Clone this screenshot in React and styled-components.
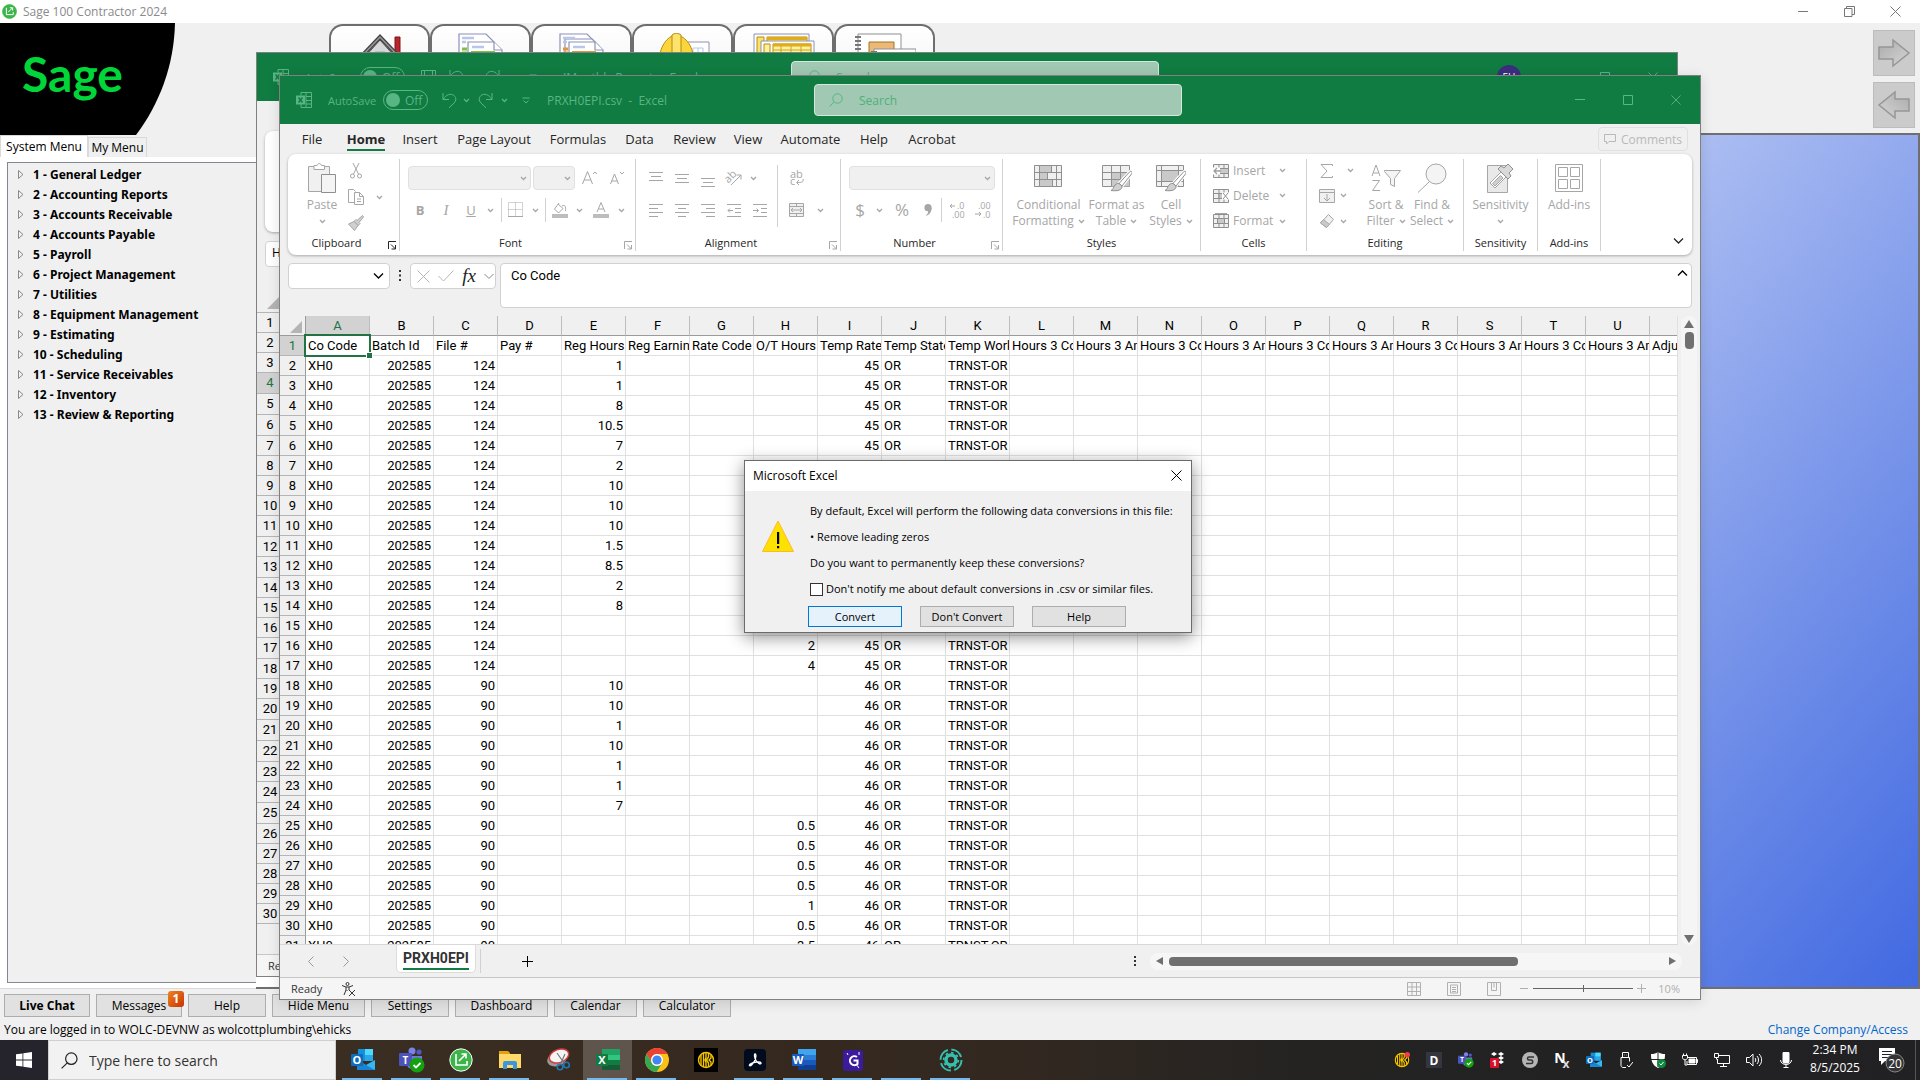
import styled, { createGlobalStyle, css } from "styled-components";

const GlobalStyle = createGlobalStyle`
  * {
    box-sizing: border-box;
  }
  body {
    margin: 0;
    overflow: hidden;
    font-family: "Open Sans", "Noto Sans", sans-serif;
    font-size: 12px;
    color: #000;
  }
  button, input {
    font: inherit;
    color: inherit;
  }
  button {
    padding: 0;
    border: 0;
    background: none;
  }
  svg {
    display: block;
    flex: none;
  }
`;

const gridFont = `Roboto, "Liberation Sans", sans-serif`;

/* ---------- desktop ---------- */
const Desktop = styled.div`
  position: relative;
  height: 100vh;
  display: flex;
  flex-direction: column;
  overflow: hidden;
  background: #f0f0f0;
`;

/* ---------- sage ---------- */
const SageTitle = styled.header`
  display: flex;
  align-items: center;
  height: 23px;
  padding-left: 2px;
  background: #fff;
  color: #8a8a8a;
  gap: 6px;
`;
const SageControls = styled.div`
  display: flex;
  margin-left: auto;
  margin-right: 2px;
  color: #777;
  button {
    display: grid;
    place-items: center;
    width: 46px;
    height: 20px;
  }
`;
const SageBody = styled.div`
  flex: 1;
  display: flex;
  min-height: 0;
`;
const SageSide = styled.aside`
  width: 256px;
  flex: none;
  display: flex;
  flex-direction: column;
`;
const Logo = styled.div`
  width: 175px;
  height: 112px;
  padding: 21px 0 0 22px;
  background: #000;
  clip-path: path("M0 0H175C174 42 160 80 136 112H0Z");
  color: #00d639;
  font: 700 48px/60px Lato, sans-serif;
`;
const SideTabs = styled.div`
  display: flex;
  align-items: flex-end;
  height: 22px;
`;
const SideTab = styled.button`
  width: ${(props) => (props.$active ? "88px" : "59px")};
  height: ${(props) => (props.$active ? "22px" : "20px")};
  border: 1px solid #d9d9d9;
  border-bottom: 0;
  background: ${(props) => (props.$active ? "#fff" : "#f0f0f0")};
`;
const TreePage = styled.div`
  flex: 1;
  padding: 5px 0 5px 7px;
  background: #fff;
  border-bottom: 1px solid #d9d9d9;
`;
const Tree = styled.ul`
  height: 100%;
  margin: 0;
  padding: 1px 0 0 10px;
  list-style: none;
  border: 1px solid #828790;
  border-right: 0;
  background: #f0f0f0;
  font-family: "Noto Sans", sans-serif;
  li {
    display: flex;
    align-items: center;
    gap: 9px;
    height: 20px;
    font-weight: 700;
  }
`;
const SageMain = styled.main`
  flex: 1;
  display: flex;
  flex-direction: column;
`;
const SageToolbar = styled.div`
  position: relative;
  display: flex;
  height: 110px;
  padding: 1px 0 0 73px;
`;
const BigTab = styled.button`
  width: 101px;
  height: 60px;
  display: flex;
  justify-content: center;
  padding-top: 7px;
  border: 2px solid #6e6e6e;
  border-bottom: 0;
  border-radius: 14px 14px 0 0;
  background: linear-gradient(#fff, #f2f2f2);
`;
const ArrowStack = styled.div`
  display: flex;
  flex-direction: column;
  gap: 6px;
  margin: 6px 5px 0 auto;
  button {
    display: grid;
    place-items: center;
    width: 42px;
    height: 46px;
    border: 1px solid #bcbcbc;
    background: #cbcbcb;
  }
`;
const Workspace = styled.div`
  flex: 1;
  border: solid #6f6f6f;
  border-width: 2px 2px 2px 0;
  background: linear-gradient(130deg, #fff 30%, #4169e1 100%);
`;
const SageButtons = styled.div`
  display: flex;
  align-items: center;
  gap: 6px;
  height: 32px;
  padding: 1px 0 0 4px;
`;
const SageButton = styled.button`
  position: relative;
  width: ${(props) => props.$w}px;
  height: 23px;
  border: 1px solid #adadad;
  background: #e1e1e1;
  font-weight: ${(props) => (props.$bold ? 700 : 400)};
`;
const Badge = styled.span`
  position: absolute;
  top: -4px;
  right: -3px;
  width: 16px;
  height: 16px;
  border-radius: 3px;
  background: linear-gradient(135deg, #f0841c, #c93205);
  color: #fff;
  font-weight: 700;
  line-height: 16px;
`;
const SageStatus = styled.footer`
  display: flex;
  justify-content: space-between;
  height: 19px;
  padding: 0 12px 0 4px;
  line-height: 18px;
  a {
    color: #0066cc;
    text-decoration: none;
  }
`;

/* ---------- excel window ---------- */
const Window = styled.section`
  position: absolute;
  display: flex;
  flex-direction: column;
  border: 1px solid #808080;
  background: #f0f0f0;
  ${(props) =>
    props.$rear
      ? css`
          left: 256px;
          right: 242px;
          top: 52px;
          bottom: 103px;
        `
      : css`
          left: 279px;
          right: 219px;
          top: 75px;
          bottom: 80px;
          box-shadow: 0 2px 12px rgba(0, 0, 0, 0.12);
        `}
`;
const ExcelTitle = styled.header`
  display: grid;
  grid-template-columns: 534px 368px 1fr;
  align-items: center;
  height: 48px;
  flex: none;
  background: #107c41;
  color: #58b584;
`;
const TitleLeft = styled.div`
  display: flex;
  align-items: center;
  padding-left: 16px;
  white-space: nowrap;
`;
const AutoSave = styled.span`
  width: 55px;
  margin-left: 16px;
  font-size: 11px;
`;
const Toggle = styled.button`
  display: flex;
  align-items: center;
  gap: 5px;
  width: 45px;
  height: 20px;
  margin-right: 8px;
  padding-left: 2px;
  border: 1px solid #58b584;
  border-radius: 10px;
  i {
    width: 14px;
    height: 14px;
    border-radius: 50%;
    background: #58b584;
  }
`;
const Slot = styled.button`
  display: grid;
  place-items: center;
  width: ${(props) => props.$w}px;
  height: 24px;
  flex: none;
`;
const Glyph = styled(Slot)`
  font-size: ${(props) => (props.$small ? 13 : 17)}px;
  line-height: 20px;
`;
const SerifI = styled.i`
  font-family: "Liberation Serif", serif;
  font-size: 15px;
`;
const DocName = styled.span`
  margin-left: ${(props) => (props.$rear ? "12px" : "3px")};
  font-size: 12px;
  white-space: pre;
`;
const SearchBox = styled.label`
  display: flex;
  align-items: center;
  gap: 14px;
  height: 32px;
  padding-left: 14px;
  border: 1px solid #d5e8dc;
  border-radius: 4px;
  background: #a0c8b2;
  input {
    flex: 1;
    min-width: 0;
    border: 0;
    outline: 0;
    background: none;
  }
  input::placeholder {
    color: #4fb07d;
    opacity: 1;
  }
`;
const WinControls = styled.div`
  display: flex;
  justify-content: flex-end;
  align-items: center;
  button {
    display: grid;
    place-items: center;
    width: 48px;
    height: 30px;
  }
`;
const Avatar = styled.span`
  width: 24px;
  height: 24px;
  margin-right: 12px;
  border-radius: 50%;
  background: #3b2e7e;
  color: #fff;
  font-size: 10px;
  line-height: 24px;
  text-align: center;
`;
const RibbonTabs = styled.nav`
  display: flex;
  align-items: center;
  height: 30px;
  flex: none;
  padding: 0 12px 0 11px;
  color: #262626;
`;
const RibbonTab = styled.button`
  width: ${(props) => props.$w}px;
  height: 28px;
  flex: none;
  font-size: 13px;
  line-height: 20px;
  white-space: nowrap;
  ${(props) =>
    props.$active &&
    css`
      font-weight: 700;
      span {
        border-bottom: 2px solid #107c41;
        padding-bottom: 1px;
      }
    `}
`;
const Comments = styled.button`
  display: flex;
  align-items: center;
  gap: 5px;
  height: 24px;
  width: 90px;
  margin-left: auto;
  padding-left: 5px;
  border: 1px solid #e0e0e0;
  border-radius: 4px;
  color: #b9b9b9;
`;
const Ribbon = styled.div`
  display: flex;
  height: 101px;
  flex: none;
  margin: 0 8px;
  padding: 5px 0 4px;
  border-radius: 8px;
  background: #fff;
  box-shadow: 0 1px 3px rgba(0, 0, 0, 0.3);
  color: #a6a6a6;
`;
const Group = styled.div`
  position: relative;
  display: flex;
  flex-direction: column;
  width: ${(props) => props.$w}px;
  flex: none;
  border-right: 1px solid #d1d1d1;
`;
const GroupBody = styled.div`
  flex: 1 1 0;
  min-height: 0;
  display: flex;
  padding: 0 0 0 ${(props) => props.$pad || 0}px;
`;
const GroupLabel = styled.div`
  height: 16px;
  flex: none;
  padding-right: ${(props) => (props.$launch ? 14 : 0)}px;
  color: #262626;
  font-size: 11px;
  line-height: 16px;
  text-align: center;
`;
const Launcher = styled.button`
  position: absolute;
  right: 3px;
  bottom: 1px;
  color: ${(props) => (props.$dark ? "#262626" : "#a6a6a6")};
`;
const ToolRows = styled.div`
  display: flex;
  flex-direction: column;
  gap: 8px;
  padding-top: 7px;
`;
const ToolRow = styled.div`
  display: flex;
  align-items: center;
  gap: ${(props) => props.$gap || 0}px;
  height: 24px;
`;
const SmallRows = styled.div`
  display: flex;
  flex-direction: column;
`;
const SmallTool = styled.button`
  display: flex;
  align-items: center;
  gap: ${(props) => props.$gap || 4}px;
  height: 26px;
  line-height: 16px;
  padding-bottom: 2px;
`;
const Combo = styled.button`
  display: flex;
  align-items: center;
  justify-content: flex-end;
  width: ${(props) => props.$w}px;
  height: 24px;
  padding-right: 3px;
  border: 1px solid #e0e0e0;
  border-radius: 4px;
  background: #f0f0f0;
`;
const Bar = styled.i`
  width: 1px;
  height: 24px;
  margin: 0 ${(props) => props.$m || 2}px;
  background: #d1d1d1;
`;
const TallBar = styled.i`
  width: 1px;
  height: 62px;
  margin: 6px 4px 0;
  background: #d1d1d1;
`;
const BigTool = styled.button`
  display: flex;
  flex-direction: column;
  align-items: center;
  width: ${(props) => props.$w}px;
  height: 76px;
  padding-top: 3px;
  line-height: 16px;
  white-space: nowrap;
  & > span {
    display: flex;
    align-items: center;
    gap: 4px;
  }
  & > svg {
    margin-top: 6px;
  }
`;
const BigIcon = styled.div`
  display: grid;
  place-items: center;
  height: 32px;
  margin-bottom: 3px;
`;
const CellsText = styled.span`
  min-width: 42px;
  text-align: left;
`;
const EditingTools = styled.div`
  display: flex;
  margin-left: 9px;
`;
const RibbonToggle = styled.button`
  align-self: flex-end;
  margin: 0 8px 6px auto;
  color: #262626;
`;

const FormulaBar = styled.div`
  display: flex;
  height: 45px;
  flex: none;
  margin: 8px;
`;
const NameBox = styled.button`
  display: flex;
  align-items: center;
  justify-content: flex-end;
  width: 102px;
  height: 26px;
  padding-right: 5px;
  border: 1px solid #d1d1d1;
  border-radius: 4px;
  background: #fff;
`;
const Dots = styled.span`
  display: grid;
  place-items: center;
  width: 20px;
  height: 26px;
`;
const FxBox = styled.div`
  display: flex;
  align-items: center;
  justify-content: space-between;
  width: 86px;
  height: 26px;
  padding: 0 1px 0 6px;
  border: 1px solid #d1d1d1;
  border-radius: 4px;
  background: #fff;
  em {
    font: italic 400 19px/20px "Liberation Serif", serif;
    color: #222;
  }
`;
const FormulaField = styled.div`
  flex: 1;
  display: flex;
  justify-content: space-between;
  margin-left: 4px;
  padding: 3px 3px 0 10px;
  border: 1px solid #d1d1d1;
  border-radius: 4px;
  background: #fff;
  input {
    flex: 1;
    height: 18px;
    padding: 0;
    border: 0;
    outline: 0;
    font: 13px/18px ${gridFont};
  }
  svg {
    margin-top: 2px;
  }
`;

/* ---------- sheet ---------- */
const SheetArea = styled.div`
  flex: 1;
  display: flex;
  min-height: 0;
`;
const SheetClip = styled.div`
  flex: 1;
  min-width: 0;
  overflow: hidden;
  border-right: 1px solid #e0e0e0;
  border-bottom: 1px solid #d9d9d9;
`;
const Sheet = styled.table`
  table-layout: fixed;
  width: 1434px;
  border-collapse: separate;
  border-spacing: 0;
  background: #fff;
  font: 13px/17px ${gridFont};
  col {
    width: 64px;
  }
  col:first-child {
    width: 26px;
  }
  tr {
    height: 20px;
  }
`;
const ColHead = styled.th`
  height: 20px;
  padding: 0;
  border-right: 1px solid ${(props) => (props.$corner ? "#9b9b9b" : "#bdbdbd")};
  border-bottom: 1px solid ${(props) => (props.$on ? "#107c41" : "#9b9b9b")};
  background: ${(props) => (props.$on ? "#d2d2d2" : "#f0f0f0")};
  color: ${(props) => (props.$on ? "#217346" : "#000")};
  font-weight: 400;
  svg {
    margin: 3px 0 0 10px;
  }
`;
const RowHead = styled.th`
  padding: 0;
  border-right: 1px solid #9b9b9b;
  border-bottom: 1px solid #b5b5b5;
  background: ${(props) => (props.$on ? "#d2d2d2" : "#f0f0f0")};
  color: ${(props) => (props.$on ? "#217346" : "#000")};
  font-weight: 400;
  text-align: center;
`;
const Cell = styled.td`
  position: relative;
  height: 20px;
  padding: 0 2px;
  border-right: 1px solid #e0e0e0;
  border-bottom: 1px solid #e0e0e0;
  text-align: ${(props) => (props.$num ? "right" : "left")};
  white-space: nowrap;
  overflow: ${(props) => (props.$clip ? "hidden" : "visible")};
  ${(props) =>
    props.$selected &&
    css`
      z-index: 1;
      &::before {
        content: "";
        position: absolute;
        inset: -2px;
        border: 2px solid #217346;
      }
      &::after {
        content: "";
        position: absolute;
        right: -3px;
        bottom: -3px;
        width: 5px;
        height: 5px;
        background: #217346;
        outline: 1px solid #fff;
      }
    `}
`;
const VScroll = styled.div`
  display: flex;
  flex-direction: column;
  align-items: center;
  width: 16px;
  margin: 0 3px;
  padding: 4px 0 2px;
  border-radius: 8px;
  background: #f5f5f5;
  i {
    width: 9px;
    height: 17px;
    margin-top: 4px;
    border-radius: 4px;
    background: #707070;
  }
  svg:last-child {
    margin-top: auto;
  }
`;
const SheetTabs = styled.div`
  display: flex;
  align-items: center;
  height: 32px;
  flex: none;
  padding-right: 18px;
`;
const SheetTab = styled.button`
  align-self: flex-start;
  width: 80px;
  height: 28px;
  margin-left: 46px;
  border: 1px solid #dcdcdc;
  border-top: 0;
  border-radius: 0 0 5px 5px;
  background: #fff;
  font: 700 14px/20px ${gridFont};
  color: #333;
  span {
    display: inline-block;
    border-bottom: 2px solid #107c41;
  }
`;
const MoreTabs = styled.span`
  margin-left: auto;
  padding: 0 5px;
`;
const HScroll = styled.div`
  display: flex;
  align-items: center;
  width: 532px;
  height: 17px;
  margin-left: 9px;
  padding: 0 5px;
  border-radius: 8px;
  background: #f6f6f6;
  i {
    width: 349px;
    height: 9px;
    margin-left: 4px;
    border-radius: 4px;
    background: #707070;
  }
  svg:last-child {
    margin-left: auto;
  }
`;
const StatusBar = styled.footer`
  display: flex;
  align-items: center;
  height: 22px;
  flex: none;
  padding: 0 20px 0 11px;
  border-top: 1px solid #c6c6c6;
  background: #f5f5f5;
  color: #333;
  font-size: 11px;
`;
const ReadyText = styled.span`
  width: 50px;
`;
const StatusRight = styled.div`
  display: flex;
  align-items: center;
  margin-left: auto;
  color: #b0b0b0;
  gap: 26px;
`;
const Zoom = styled.div`
  display: flex;
  align-items: center;
  gap: 4px;
  margin-left: -8px;
`;
const ZoomValue = styled.span`
  margin-left: 8px;
`;

/* ---------- rear window left edge ---------- */
const RearRibbon = styled.div`
  height: 101px;
  flex: none;
  margin: 30px 9px 9px 8px;
  border-radius: 8px;
  background: #fff;
  box-shadow: 0 1px 3px rgba(0, 0, 0, 0.3);
`;
const RearName = styled.div`
  width: 102px;
  height: 26px;
  flex: none;
  margin: 0 0 30px 8px;
  padding-left: 6px;
  border: 1px solid #d1d1d1;
  border-radius: 4px;
  background: #fff;
  line-height: 22px;
`;
const RearCorner = styled.div`
  height: 16px;
  flex: none;
  padding-left: 10px;
  border-bottom: 1px solid #b5b5b5;
`;
const RearRow = styled.div`
  width: 26px;
  height: ${(props) => (props.$tall ? 21 : 20)}px;
  flex: none;
  border-bottom: 1px solid #b5b5b5;
  background: ${(props) => (props.$on ? "#d2d2d2" : "#f0f0f0")};
  color: ${(props) => (props.$on ? "#217346" : "#000")};
  font: 13px/19px ${gridFont};
  text-align: center;
`;

/* ---------- dialog ---------- */
const Dialog = styled.div`
  position: absolute;
  left: 744px;
  top: 460px;
  width: 448px;
  border: 1px solid #6b6b6b;
  background: #f0f0f0;
  box-shadow: 0 4px 16px rgba(0, 0, 0, 0.45);
  font-size: 11px;
`;
const DialogTitle = styled.div`
  display: flex;
  align-items: center;
  justify-content: space-between;
  height: 30px;
  padding: 0 9px 2px 8px;
  background: #fff;
  font-size: 12px;
`;
const DialogBody = styled.div`
  display: grid;
  grid-template-columns: 48px 1fr;
  padding: 7px 8px 5px 17px;
  line-height: 26px;
  p {
    margin: 0;
    white-space: nowrap;
  }
`;
const DialogIcon = styled.div`
  padding-top: 22px;
`;
const Check = styled.label`
  display: flex;
  align-items: center;
  gap: 3px;
  height: 26px;
  input {
    appearance: none;
    width: 13px;
    height: 13px;
    margin: 0;
    border: 1px solid #333;
    background: #fff;
  }
`;
const DialogButtons = styled.div`
  display: flex;
  gap: 18px;
  padding: 4px 0 0;
  margin-left: -2px;
`;
const DialogButton = styled.button`
  width: 94px;
  height: 21px;
  border: 1px solid ${(props) => (props.$primary ? "#0078d7" : "#adadad")};
  background: ${(props) => (props.$primary ? "#e5f1fb" : "#e1e1e1")};
  line-height: 19px;
`;

/* ---------- taskbar ---------- */
const Taskbar = styled.footer`
  display: flex;
  height: 40px;
  flex: none;
  background: linear-gradient(90deg, #25232b 2%, #3a2d22 18%, #35291f 42%, #332820 52%, #242322 68%, #212124 100%);
  color: #fff;
`;
const Start = styled.button`
  display: grid;
  place-items: center;
  width: 48px;
`;
const TaskSearch = styled.label`
  display: flex;
  align-items: center;
  gap: 9px;
  width: 288px;
  padding-left: 12px;
  border: 1px solid #cfcfcf;
  background: #f2f2f2;
  color: #222;
  input {
    flex: 1;
    min-width: 0;
    border: 0;
    outline: 0;
    background: none;
    font-size: 14px;
  }
  input::placeholder {
    color: #333;
    opacity: 1;
  }
`;
const TaskApps = styled.div`
  display: flex;
  padding-left: 2px;
`;
const TaskApp = styled.button`
  display: grid;
  place-items: center;
  width: 49px;
  background: ${(props) => (props.$active ? "rgba(255,255,255,0.2)" : "none")};
  position: relative;
  &::after {
    content: "";
    position: absolute;
    left: 4px;
    right: 5px;
    bottom: 0;
    height: 2px;
    background: ${(props) => (props.$open ? "#76b9ed" : "none")};
  }
`;
const Tray = styled.div`
  display: flex;
  margin-left: auto;
  button {
    display: grid;
    place-items: center;
    width: 32px;
  }
`;
const Clock = styled.div`
  width: 66px;
  padding-top: 1px;
  line-height: 18px;
  text-align: center;
`;
const Notice = styled.div`
  display: grid;
  place-items: center;
  width: 48px;
  margin-right: 4px;
  border-right: 1px solid #555;
`;

/* ---------- icons ---------- */
const Icon = ({ w = 16, h = w, box, children, sw = 1, fill = "none" }) => (
  <svg
    width={w}
    height={h}
    viewBox={box || `0 0 ${w} ${h}`}
    fill={fill}
    stroke="currentColor"
    strokeWidth={sw}
  >
    {children}
  </svg>
);
const Chevron = () => (
  <Icon w={7} h={5} sw={1.3}>
    <path d="M1 1l2.5 2.5L6 1" />
  </Icon>
);
const WideChevron = ({ up }) => (
  <Icon w={11} h={8} sw={1.3}>
    <path d={up ? "M1 6.500l4.500-4.500 4.500 4.500" : "M1 1.500l4.500 4.500 4.500-4.500"} />
  </Icon>
);
const Close = ({ size = 11 }) => (
  <Icon w={size} box="0 0 11 11">
    <path d="M.5.5l10 10M10.500.5l-10 10" />
  </Icon>
);
const Minus = () => (
  <Icon w={10}>
    <path d="M0 4.500h10" />
  </Icon>
);
const Plus = ({ size = 10 }) => (
  <Icon w={size}>
    <path d={`M0 ${size / 2}h${size}M${size / 2} 0v${size}`} />
  </Icon>
);
const Square = () => (
  <Icon w={10}>
    <path d="M.5.5h9v9h-9z" />
  </Icon>
);
const Magnifier = ({ size = 14 }) => (
  <Icon w={size} box="0 0 14 14">
    <circle cx="8.500" cy="5.500" r="4.700" />
    <path d="M5.200 9L.5 13.500" />
  </Icon>
);
const ExcelMark = () => (
  <Icon w={16}>
    <path d="M5 .5h10.500v15H5M10 .5v15M10 4.500h5.500M10 8.500h5.500M10 12h5.500M5 .5v3M5 12v3.500" />
    <path d="M0 3.500h9v9H0z" fill="currentColor" stroke="none" />
    <path d="M2.500 5.500l4 5M6.500 5.500l-4 5" stroke="#107c41" strokeWidth="1.500" />
  </Icon>
);
const Undo = ({ flip }) => (
  <Icon w={15} h={17}>
    <g transform={flip ? "translate(15 0) scale(-1 1)" : undefined}>
      <path d="M1 1v6.500h6M1.200 7.300C4 2.500 9 1 12 3.500c3 3 2 6-1 8.500L7 15.800" />
    </g>
  </Icon>
);
const LaunchIcon = () => (
  <Icon w={8} h={9}>
    <path d="M.5 8V.5H8M3 3.500l4.500 4.500M7.500 4v4h-4" />
  </Icon>
);
const Lines = ({ rows }) => (
  <Icon w={14} h={18}>
    {rows.map(([x, y, len]) => (
      <path key={y} d={`M${x} ${y}.5h${len}`} />
    ))}
  </Icon>
);
const alignIcons = {
  top: [[0, 3, 14], [2, 7, 10], [0, 11, 14]],
  middle: [[0, 5, 14], [2, 9, 10], [0, 13, 14]],
  bottom: [[0, 9, 14], [2, 13, 10], [0, 17, 14]],
  left: [[0, 3, 14], [0, 7, 9], [0, 11, 14], [0, 15, 9]],
  center: [[0, 3, 14], [3, 7, 8], [0, 11, 14], [3, 15, 8]],
  right: [[0, 3, 14], [5, 7, 9], [0, 11, 14], [5, 15, 9]],
};
const Indent = ({ out }) => (
  <Icon w={14} h={18}>
    <path d="M0 3.500h14M8 7.500h6M8 11.500h6M0 15.500h14" />
    <path d={out ? "M6 9.500H1M3 7.500l-2 2 2 2" : "M0 9.500h5.500M3.500 7.500l2 2-2 2"} />
  </Icon>
);
const Brush = () => (
  <g stroke="#8f8f8f" fill="#d0d0d0">
    <path d="M29.500 7.500c.8.6.6 1.500 0 2.500L20 22l-3-2.500L27 8.500c.8-1 1.800-1.500 2.500-1z" stroke="#fff" strokeWidth="3" />
    <path d="M29.500 7.500c.8.6.6 1.500 0 2.500L20 22l-3-2.500L27 8.500c.8-1 1.800-1.500 2.500-1z" fill="#fff" />
    <path d="M17 19.500l3 2.500c.5 3.500-3.500 5.500-11 4.500 2-1 2-2 3-4s3-3.500 5-3z" />
  </g>
);
const TableGlyph = ({ kind }) => (
  <Icon w={30} h={28}>
    <path d="M.5 1.500h27v21H.5z" fill="#f0f0f0" stroke="#8f8f8f" />
    {kind === "conditional" && (
      <>
        <path d="M5.500 1.500h12v7h-12zM5.500 8.500h8v7h-8zM5.500 15.500h13v7h-13z" fill="#c9c9c9" stroke="#8f8f8f" />
        <path d="M.5 8.500h27M.5 15.500h27M22.500 1.500v21" stroke="#8f8f8f" />
      </>
    )}
    {kind === "table" && (
      <>
        <path d="M9.500 8.500h18v14h-18z" fill="#c9c9c9" />
        <path d="M.5 8.500h27M.5 15.500h27M9.500 1.500v21M18.500 1.500v21" stroke="#8f8f8f" />
        <Brush />
      </>
    )}
    {kind === "cell" && (
      <>
        <path d="M5.500 6.500h17v11h-17z" fill="#c9c9c9" />
        <path d="M5.500 1.500v21M22.500 1.500v21M.5 6.500h27M.5 17.500h27" stroke="#8f8f8f" />
        <Brush />
      </>
    )}
  </Icon>
);
const CellsGlyph = ({ kind }) => (
  <Icon w={16}>
    <g stroke="#8f8f8f">
      <path d="M.5 1.500h15v13H.5z" fill="#f0f0f0" />
      <path d="M6 1.500v13M11 1.500v13M.5 5.500h15M.5 10.500h15" />
      <path d={kind === "format" ? "M4.500 5.500h7v5h-7z" : "M6 5.500h9.500v5H6z"} fill="#c9c9c9" />
    </g>
    {kind === "insert" && (
      <>
        <path d="M0 4.500h7v7H0z" fill="#fff" stroke="none" />
        <path d="M8 8H1M4 5L1 8l3 3" stroke="#9f9f9f" strokeWidth="1.300" />
      </>
    )}
    {kind === "delete" && (
      <>
        <path d="M9 4.500h7v7H9z" fill="#fff" stroke="none" />
        <path d="M10 5l5 6M15 5l-5 6" stroke="#8f8f8f" />
      </>
    )}
    {kind === "format" && <path d="M2 .5h12" />}
  </Icon>
);
const PageIcon = ({ accent, back }) => (
  <Icon w={46} h={40} sw={1.2}>
    <g stroke="#8c92b5" fill="#fff">
      <path d="M1 1h27l8 8v30H1z" />
      {back && <path d="M6 6h27l7 7v26H6z" />}
      <path d="M10 9h26l8 8v22H10z" />
      <path d="M36 9v8h8" />
    </g>
    <path d="M4 5h12M4 9h4M14 14h12" stroke="#b9c6ea" strokeWidth="2.500" />
    <path d="M4 16h5M4 20h5M13 19.500h24" stroke={accent} strokeWidth="3" />
  </Icon>
);
const HouseIcon = () => (
  <Icon w={46} h={40}>
    <path d="M38 4h5v22h-5z" fill="#b8272c" stroke="#7c1518" />
    <path d="M6 26L23 7l17 19v14H6z" fill="#d8d8d8" stroke="#555" />
    <path d="M3 25L23 4l20 21" stroke="#444" strokeWidth="4" />
    <path d="M3 25L23 4l20 21" stroke="#999" strokeWidth="1.500" />
    <path d="M18 19h10v12H18z" fill="#fff" stroke="#7bb5c9" />
  </Icon>
);
const HelmetIcon = () => (
  <Icon w={56} h={40}>
    <path d="M30 9h24v30H30z" fill="#fff" stroke="#8c92b5" />
    <path d="M38 15h10v7H38zM43 15v7" stroke="#b9c6ea" />
    <path d="M4 30C4 14 12 3 21 2c10 1 18 12 18 28z" fill="#fbd53c" stroke="#b98a10" />
    <path d="M17 30V2c2-2 7-2 9 0v28z" fill="#fde36c" stroke="#b98a10" />
  </Icon>
);
const LedgerIcon = () => (
  <Icon w={62} h={40}>
    <path d="M1 1h55v38H1z" fill="#fff" stroke="#8c92b5" />
    <path d="M4 4h7v30H4zM14 4h40v30H14z" fill="#fbe36a" stroke="#b98a10" />
    <path d="M14 5.500h40" stroke="#e0ac1a" strokeWidth="3" />
    <path d="M8 8h53v31H8z" fill="#fff" stroke="#8c92b5" />
    <path d="M11 11h6v28h-6zM20 11h38v28H20z" fill="#fff29a" stroke="#b98a10" />
    <path d="M20 12h38" stroke="#e0ac1a" strokeWidth="3" />
    <path d="M20 17h38M20 21h38M28 13v26M38 13v26M48 13v26" stroke="#c9a531" />
  </Icon>
);
const NotebookIcon = () => (
  <Icon w={62} h={40}>
    <path d="M4 1h43v38H4z" fill="#fff" stroke="#8f8f8f" />
    <path d="M15 9h25v14H15z" fill="#ebb976" stroke="#a5732a" />
    <path d="M20 16h42v24H20z" fill="#fff" stroke="#8f8f8f" />
    <path d="M1 4h6M1 8h6M1 12h6M1 16h6M1 20h6M17 19h6" stroke="#777" strokeWidth="2" />
  </Icon>
);
const BlockArrow = ({ left }) => (
  <Icon w={34} h={30}>
    <defs>
      <linearGradient id="arrowFill" x1="0" y1="0" x2="1" y2="1">
        <stop offset="0" stopColor="#aaa" />
        <stop offset="1" stopColor="#d6d6d6" />
      </linearGradient>
    </defs>
    <g transform={left ? "translate(34 0) scale(-1 1)" : undefined}>
      <path d="M2 9h14V2l16 13-16 13v-7H2z" fill="url(#arrowFill)" stroke="#969696" strokeWidth="1.500" />
    </g>
  </Icon>
);
const Tri = ({ d }) => (
  <svg width="10" height="8" viewBox="0 0 10 8">
    <path d={d} fill="#707070" />
  </svg>
);
const SageRound = ({ size }) => (
  <Icon w={size} box="0 0 24 24">
    <circle cx="12" cy="12" r="11.200" fill="#3cb44a" stroke={size > 20 ? "#fff" : "#3cb44a"} />
    <path d="M7 6v11h11v-4M10 13l7-7M12.500 6H17v4.500" stroke="#fff" strokeWidth="1.600" />
  </Icon>
);
const Letter = ({ x, y, size, children, fill = "#fff" }) => (
  <text
    x={x}
    y={y}
    fill={fill}
    stroke="none"
    textAnchor="middle"
    fontFamily="Open Sans, sans-serif"
    fontWeight="700"
    fontSize={size}
  >
    {children}
  </text>
);
const OfficeIcon = ({ letter, colors, size = 24 }) => (
  <svg width={size} height={size} viewBox="0 0 24 24">
    <path d="M6 1h18v6H6z" fill={colors[0]} />
    <path d="M6 7h18v5H6z" fill={colors[1]} />
    <path d="M6 12h18v5H6z" fill={colors[2]} />
    <path d="M6 17h18v5H6z" fill={colors[3]} />
    <rect y="6" width="12" height="12" rx="1" fill={colors[4]} />
    <Letter x={6} y={16} size={11}>{letter}</Letter>
  </svg>
);
const OutlookIcon = ({ size = 24 }) => (
  <svg width={size} height={size} viewBox="0 0 24 24">
    <path d="M7 1h15v12H7z" fill="#1490df" />
    <path d="M14 1h8v6h-8z" fill="#50d9ff" />
    <path d="M14 7h8v6h-8z" fill="#28a8ea" />
    <path d="M6 12l9 5 9-5v10H6z" fill="#35b8f1" />
    <path d="M6 12l18 10H6z" fill="#1784d8" />
    <rect y="6" width="12" height="12" rx="1" fill="#0f6cbd" />
    <Letter x={6} y={16} size={11}>O</Letter>
  </svg>
);
const TeamsIcon = ({ size = 26 }) => (
  <svg width={size} height={size} viewBox="0 0 26 26">
    <circle cx="13" cy="4" r="3.500" fill="#7b83eb" />
    <circle cx="20" cy="5" r="2.600" fill="#5059c9" />
    <path d="M8 9h15v8a5 5 0 01-5 5h-5a5 5 0 01-5-5z" fill="#6f77e0" />
    <rect y="6" width="13" height="13" rx="1" fill="#4b53bc" />
    <Letter x={6.5} y={16.5} size={10}>T</Letter>
    <circle cx="18" cy="18" r="7.500" fill="#13a10e" />
    <path d="M14.500 18l2.500 2.500 4.500-4.500" stroke="#fff" strokeWidth="1.800" fill="none" />
  </svg>
);
const FolderIcon = () => (
  <svg width="22" height="20" viewBox="0 0 22 20">
    <path d="M0 1h9l2 2v5H0z" fill="#e5a00d" />
    <path d="M0 4h22v14H0z" fill="#ffd869" />
    <path d="M4 19v-6a2 2 0 012-2h10a2 2 0 012 2v6h-4v-4H8v4z" fill="#3a96dd" />
  </svg>
);
const SnipIcon = () => (
  <svg width="24" height="24" viewBox="0 0 24 24">
    <ellipse cx="10" cy="11" rx="10" ry="7" fill="#9a9a9a" transform="rotate(-20 10 11)" />
    <ellipse cx="12" cy="8" rx="10" ry="6.500" fill="#f4f4f4" stroke="#d33b3b" strokeWidth="1.500" transform="rotate(-20 12 8)" />
    <path d="M10 5l7 10M18 6l-4 9" stroke="#777" strokeWidth="1.200" />
    <circle cx="13" cy="19" r="2.800" fill="none" stroke="#2477b5" strokeWidth="1.600" />
    <circle cx="19.500" cy="17" r="2.800" fill="none" stroke="#2477b5" strokeWidth="1.600" />
  </svg>
);
const ChromeIcon = () => (
  <svg width="24" height="24" viewBox="0 0 24 24">
    <circle cx="12" cy="12" r="12" fill="#fbc116" />
    <path d="M1.600 6A12 12 0 0122.400 6H12a6 6 0 00-5.200 9z" fill="#ea4335" />
    <path d="M1.600 6a12 12 0 0010 18l5.600-9a6 6 0 01-10.400 0z" fill="#34a853" />
    <circle cx="12" cy="12" r="6" fill="#fff" />
    <circle cx="12" cy="12" r="4.600" fill="#4285f4" />
  </svg>
);
const KeeperIcon = ({ small }) => (
  <svg width={small ? 16 : 24} height={small ? 16 : 24} viewBox={small ? "3 3 18 18" : "0 0 24 24"}>
    <path d="M0 0h24v24H0z" fill={small ? "none" : "#000"} />
    <g fill="none" stroke="#f5c400" strokeWidth="1.400">
      <circle cx="12" cy="12" r="7.500" fill="#000" />
      <path d="M7 7v10M9.500 5v14M12 4.500v5l-1 2.500 1 2.500v5M14.500 5v4L12.500 12l2 3v4M17 7v3l-2 2 2 2v3" />
    </g>
    {small && <circle cx="18" cy="6" r="3" fill="#f23b48" />}
  </svg>
);
const AcrobatIcon = () => (
  <svg width="22" height="22" viewBox="0 0 22 22">
    <rect width="22" height="22" rx="4" fill="#000b1d" />
    <path
      d="M11 5c1.500 0 1 4-.5 7-1.500 3-4 5.500-5 4.500s3-3 7-3.500c3-.4 5 .5 4.500 1.500s-3.500-.5-5-3C10.500 9 10 5 11 5z"
      fill="none"
      stroke="#fff"
      strokeWidth="1.300"
    />
  </svg>
);
const PurpleIcon = () => (
  <svg width="20" height="21" viewBox="0 0 20 21">
    <rect width="20" height="21" rx="3" fill="#3b1a9b" />
    <path d="M14 7a4.500 4.500 0 10.500 7V10.500H10.500" fill="none" stroke="#fff" strokeWidth="2" />
    <path d="M4 3l1 2M16 2v3M13 14l3 4" stroke="#fff" />
  </svg>
);
const GearIcon = () => (
  <svg width="24" height="24" viewBox="0 0 24 24" fill="none" stroke="#35bfae">
    <circle cx="12" cy="12" r="10.500" strokeWidth="2" strokeDasharray="13 3.500" />
    <circle cx="12" cy="12" r="5" strokeWidth="3.500" />
    <circle cx="12" cy="12" r="7.300" strokeWidth="1.800" strokeDasharray="2.500 3.200" />
  </svg>
);
const TrayBadge = ({ bg, letter }) => (
  <svg width="16" height="16" viewBox="0 0 16 16">
    <rect width="16" height="16" fill={bg} />
    <Letter x={8} y={12.5} size={12}>{letter}</Letter>
  </svg>
);
const WinLogo = () => (
  <svg width="16" height="16" viewBox="0 0 16 16" fill="#fff">
    <path d="M0 2.300L6.500 1.400v6.200H0zM7.300 1.300L16 0v7.600H7.300zM0 8.400h6.500v6.200L0 13.700zM7.300 8.400H16V16l-8.700-1.300z" />
  </svg>
);
const WarningIcon = () => (
  <svg width="32" height="32" viewBox="0 0 32 32">
    <path d="M16 1L31.500 31.500H.5z" fill="#fde100" stroke="#fdb92a" />
    <path d="M15 12h2.200v12H15zM15 26h2.200v2.200H15z" fill="#000" />
  </svg>
);

/* ---------- data ---------- */
const menu = [
  "General Ledger",
  "Accounting Reports",
  "Accounts Receivable",
  "Accounts Payable",
  "Payroll",
  "Project Management",
  "Utilities",
  "Equipment Management",
  "Estimating",
  "Scheduling",
  "Service Receivables",
  "Inventory",
  "Review & Reporting",
];
const sageButtons = [
  ["Live Chat", 86],
  ["Messages", 86],
  ["Help", 78],
  ["Hide Menu", 93],
  ["Settings", 78],
  ["Dashboard", 93],
  ["Calendar", 83],
  ["Calculator", 88],
];
const ribbonTabs = [
  ["File", 42],
  ["Home", 66],
  ["Insert", 42],
  ["Page Layout", 106],
  ["Formulas", 62],
  ["Data", 61],
  ["Review", 49],
  ["View", 58],
  ["Automate", 67],
  ["Help", 60],
  ["Acrobat", 56],
];
const columns = "ABCDEFGHIJKLMNOPQRSTU".split("").concat("");
const headings = [
  "Co Code",
  "Batch Id",
  "File #",
  "Pay #",
  "Reg Hours",
  "Reg Earnings",
  "Rate Code",
  "O/T Hours",
  "Temp Rate",
  "Temp State",
  "Temp Work",
  ...Array.from({ length: 10 }, (_, i) => (i % 2 ? "Hours 3 Amount" : "Hours 3 Code")),
  "Adjust",
];
const regHours = [1, 1, 8, 10.5, 7, 2, 10, 10, 10, 1.5, 8.5, 2, 8, "", "", "", 10, 10, 1, 10, 1, 1, 7];
const otHours = { 16: 2, 17: 4, 25: 0.5, 26: 0.5, 27: 0.5, 28: 0.5, 29: 1, 30: 0.5, 31: 3.5 };
const rows = Array.from({ length: 30 }, (_, i) => {
  const n = i + 2;
  const file = n < 18 ? 124 : 90;
  return {
    n,
    cells: ["XH0", 202585, file, "", regHours[i] ?? "", "", "", otHours[n] ?? "", n < 18 ? 45 : 46, "OR", "TRNST-OR"],
  };
});
const tallRows = [4, 5, 6, 11, 13, 17, 20, 21, 22, 24, 25];

/* ---------- components ---------- */
function SageApp() {
  return (
    <>
      <SageTitle>
        <SageRound size={15} />
        Sage 100 Contractor 2024
        <SageControls>
          <button aria-label="Minimize"><Minus /></button>
          <button aria-label="Restore">
            <Icon w={11}>
              <path d="M.5 2.500h7.500v8H.5zM2.500 2.500v-2h8v8H8" />
            </Icon>
          </button>
          <button aria-label="Close"><Close /></button>
        </SageControls>
      </SageTitle>
      <SageBody>
        <SageSide>
          <Logo>Sage</Logo>
          <SideTabs>
            <SideTab $active>System Menu</SideTab>
            <SideTab>My Menu</SideTab>
          </SideTabs>
          <TreePage>
            <Tree>
              {menu.map((name, i) => (
                <li key={name}>
                  <Icon w={6} h={9}>
                    <path d="M.5.5L5 4.500.5 8.500z" stroke="#888" />
                  </Icon>
                  {i + 1} - {name}
                </li>
              ))}
            </Tree>
          </TreePage>
        </SageSide>
        <SageMain>
          <SageToolbar>
            <BigTab aria-label="Home"><HouseIcon /></BigTab>
            <BigTab aria-label="Reports"><PageIcon accent="#7cc142" /></BigTab>
            <BigTab aria-label="Forms"><PageIcon accent="#e2953a" back /></BigTab>
            <BigTab aria-label="Projects"><HelmetIcon /></BigTab>
            <BigTab aria-label="Ledgers"><LedgerIcon /></BigTab>
            <BigTab aria-label="Notes"><NotebookIcon /></BigTab>
            <ArrowStack>
              <button aria-label="Next"><BlockArrow /></button>
              <button aria-label="Previous"><BlockArrow left /></button>
            </ArrowStack>
          </SageToolbar>
          <Workspace />
        </SageMain>
      </SageBody>
      <SageButtons>
        {sageButtons.map(([name, w]) => (
          <SageButton key={name} $w={w} $bold={name === "Live Chat"}>
            {name}
            {name === "Messages" && <Badge>1</Badge>}
          </SageButton>
        ))}
      </SageButtons>
      <SageStatus>
        <span>You are logged in to WOLC-DEVNW as wolcottplumbing\ehicks</span>
        <a href="#company">Change Company/Access</a>
      </SageStatus>
    </>
  );
}

function ExcelHeader({ name, rear }) {
  return (
    <ExcelTitle>
      <TitleLeft>
        <ExcelMark />
        <AutoSave>AutoSave</AutoSave>
        <Toggle>
          <i />
          Off
        </Toggle>
        {rear && (
          <Slot $w={30} aria-label="Save">
            <Icon w={15}>
              <path d="M.5.5h14v14H.5zM3.500.5v5h8v-5M3.500 14.500v-5h8v5" />
            </Icon>
          </Slot>
        )}
        <Slot $w={26} aria-label="Undo"><Undo /></Slot>
        <Slot $w={8} aria-label="Undo list"><Chevron /></Slot>
        <Slot $w={30} aria-label="Redo"><Undo flip /></Slot>
        <Slot $w={8} aria-label="Redo list"><Chevron /></Slot>
        <Slot $w={36} aria-label="Customize">
          <Icon w={8} h={7}>
            <path d="M.5 1h7M1.500 3.500L4 6l2.500-2.500" />
          </Icon>
        </Slot>
        <DocName $rear={rear}>{name}</DocName>
      </TitleLeft>
      <SearchBox>
        <Magnifier />
        <input placeholder="Search" aria-label="Search" />
      </SearchBox>
      <WinControls>
        {rear && <Avatar>EH</Avatar>}
        <button aria-label="Minimize"><Minus /></button>
        <button aria-label="Maximize"><Square /></button>
        <button aria-label="Close"><Close size={10} /></button>
      </WinControls>
    </ExcelTitle>
  );
}

function RearExcel() {
  return (
    <Window $rear>
      <ExcelHeader rear name="!Monthly Report  -  Excel" />
      <RearRibbon />
      <RearName>H</RearName>
      <RearCorner>
        <Icon w={12}>
          <path d="M12 0v12H0z" fill="#b4b4b4" stroke="none" />
        </Icon>
      </RearCorner>
      {Array.from({ length: 30 }, (_, i) => i + 1).map((n) => (
        <RearRow key={n} $tall={tallRows.includes(n)} $on={n === 4}>
          {n}
        </RearRow>
      ))}
      <SheetArea />
      <StatusBar>Ready</StatusBar>
    </Window>
  );
}

function HomeRibbon() {
  return (
    <Ribbon>
      <Group $w={112}>
        <GroupBody $pad={14}>
          <BigTool $w={40}>
            <BigIcon>
              <Icon w={28} h={30}>
                <path d="M.5 3.500h21v25H.5z" fill="#f0f0f0" />
                <path d="M6 6.500v-4h3C9.500 0 13 0 13.500 2.500h3v4z" fill="#fff" />
                <path d="M13.500 11.500h14v18h-14z" fill="#f4f4f4" stroke="#8f8f8f" />
              </Icon>
            </BigIcon>
            <span>Paste</span>
            <Chevron />
          </BigTool>
          <SmallRows>
            <SmallTool aria-label="Cut">
              <Slot as="span" $w={28}>
                <Icon w={12} h={16}>
                  <path d="M3 0l5.500 11M9 0L3.500 11" />
                  <circle cx="2.500" cy="13" r="2" />
                  <circle cx="9.500" cy="13" r="2" />
                </Icon>
              </Slot>
            </SmallTool>
            <SmallTool $gap={6} aria-label="Copy">
              <Slot as="span" $w={28}>
                <Icon w={16}>
                  <path d="M6 13.500H.5V.5h5l2 2M6.500 3.500h5l4 4v8h-9zM11.500 3.500v4h4M9 10h4M9 12.500h4" />
                </Icon>
              </Slot>
              <Chevron />
            </SmallTool>
            <SmallTool aria-label="Format Painter">
              <Slot as="span" $w={28}>
                <Icon w={16}>
                  <path d="M14.500.5L9 5.500 8 4.500 6 6.500l4 4 2-2-1-1L15.500 2z" fill="#d0d0d0" />
                  <path d="M6 6.500L.5 9l6 6.500L10 10.500z" fill="#d0d0d0" />
                </Icon>
              </Slot>
            </SmallTool>
          </SmallRows>
        </GroupBody>
        <GroupLabel $launch>Clipboard</GroupLabel>
        <Launcher $dark aria-label="Clipboard options"><LaunchIcon /></Launcher>
      </Group>

      <Group $w={236}>
        <GroupBody $pad={8}>
          <ToolRows>
            <ToolRow $gap={2}>
              <Combo $w={123} aria-label="Font"><Chevron /></Combo>
              <Combo $w={42} aria-label="Font size"><Chevron /></Combo>
              <Slot $w={25} aria-label="Grow font">
                <Icon w={16}>
                  <path d="M.5 14L5.500 1.500 10.500 14M2.200 10h6.600M11 4l2-2 2 2" />
                </Icon>
              </Slot>
              <Slot $w={25} aria-label="Shrink font">
                <Icon w={16}>
                  <path d="M1.500 14L5.500 4 9.500 14M3 11h5M11 2l2 2 2-2" />
                </Icon>
              </Slot>
            </ToolRow>
            <ToolRow>
              <Glyph $w={24} $small><b>B</b></Glyph>
              <Glyph $w={28} $small><SerifI>I</SerifI></Glyph>
              <Glyph $w={22} $small><u>U</u></Glyph>
              <Slot $w={16} aria-label="Underline list"><Chevron /></Slot>
              <Bar $m={3} />
              <Slot $w={22} aria-label="Borders">
                <Icon w={16}>
                  <path d="M.5.5h14v14H.5zM7.500.5v14M.5 7.500h14" strokeDasharray="1 1" />
                  <path d="M0 14.500h15" />
                </Icon>
              </Slot>
              <Slot $w={16} aria-label="Border list"><Chevron /></Slot>
              <Bar $m={2} />
              <Slot $w={24} aria-label="Fill color">
                <Icon w={16}>
                  <path d="M7 1L2.500 7l4 4L11 6.500 6 2M10 4c3-2 4 1 3.500 5" />
                  <path d="M0 12h16v4H0z" fill="#bdbdbd" stroke="none" />
                </Icon>
              </Slot>
              <Slot $w={14} aria-label="Fill list"><Chevron /></Slot>
              <Slot $w={30} aria-label="Font color">
                <Icon w={16}>
                  <path d="M4 10L8 .5 12 10M5.500 7h5" />
                  <path d="M0 12h16v4H0z" fill="#bdbdbd" stroke="none" />
                </Icon>
              </Slot>
              <Slot $w={10} aria-label="Font color list"><Chevron /></Slot>
            </ToolRow>
          </ToolRows>
        </GroupBody>
        <GroupLabel $launch>Font</GroupLabel>
        <Launcher aria-label="Font options"><LaunchIcon /></Launcher>
      </Group>

      <Group $w={205}>
        <GroupBody $pad={7}>
          <ToolRows>
            <ToolRow>
              {["top", "middle", "bottom"].map((k) => (
                <Slot key={k} $w={26} aria-label={k}><Lines rows={alignIcons[k]} /></Slot>
              ))}
              <Slot $w={26} aria-label="Orientation">
                <Icon w={18}>
                  <path d="M6 16L16 6M11.500 6H16v4.500" />
                  <text x="0" y="11" fontSize="11" fill="currentColor" stroke="none" transform="rotate(-45 6 9)">ab</text>
                </Icon>
              </Slot>
              <Slot $w={12} aria-label="Orientation list"><Chevron /></Slot>
            </ToolRow>
            <ToolRow>
              {["left", "center", "right"].map((k) => (
                <Slot key={k} $w={26} aria-label={k}><Lines rows={alignIcons[k]} /></Slot>
              ))}
              <Slot $w={26} aria-label="Decrease indent"><Indent out /></Slot>
              <Slot $w={26} aria-label="Increase indent"><Indent /></Slot>
            </ToolRow>
          </ToolRows>
          <TallBar />
          <ToolRows>
            <ToolRow>
              <Slot $w={30} aria-label="Wrap text">
                <Icon w={16}>
                  <text x="1" y="8" fontSize="11" fill="currentColor" stroke="none">ab</text>
                  <text x="1" y="15" fontSize="11" fill="currentColor" stroke="none">c</text>
                  <path d="M14 9c1 3-1 3.500-6 3.500M10 10l-2.500 2.500L10 15" />
                </Icon>
              </Slot>
            </ToolRow>
            <ToolRow>
              <Slot $w={30} aria-label="Merge">
                <Icon w={16}>
                  <path d="M.5 1.500h14v13H.5zM.5 4.500h14M.5 11.500h14M7.500 1.500v3M7.500 11.500v3" fill="#f0f0f0" />
                  <path d="M2 8h11M4 6L2 8l2 2M11 6l2 2-2 2" />
                </Icon>
              </Slot>
              <Slot $w={16} aria-label="Merge list"><Chevron /></Slot>
            </ToolRow>
          </ToolRows>
        </GroupBody>
        <GroupLabel $launch>Alignment</GroupLabel>
        <Launcher aria-label="Alignment options"><LaunchIcon /></Launcher>
      </Group>

      <Group $w={162}>
        <GroupBody $pad={8}>
          <ToolRows>
            <ToolRow>
              <Combo $w={146} aria-label="Number format"><Chevron /></Combo>
            </ToolRow>
            <ToolRow>
              <Glyph $w={22}>$</Glyph>
              <Slot $w={16} aria-label="Currency list"><Chevron /></Slot>
              <Glyph $w={30}>%</Glyph>
              <Slot $w={22} aria-label="Comma style">
                <Icon w={8} h={12} fill="currentColor">
                  <circle cx="4" cy="3.700" r="3.600" stroke="none" />
                  <path d="M7.600 3.700c0 4-2 7-6 8.300 2-2 3-3.500 2.300-5z" stroke="none" />
                </Icon>
              </Slot>
              <Bar $m={2} />
              <Slot $w={26} aria-label="Increase decimal">
                <Icon w={16} h={18}>
                  <path d="M6 5H1M3 3L1 5l2 2" />
                  <text x="8" y="8" fontSize="9" fill="currentColor" stroke="none">.0</text>
                  <text x="3" y="17" fontSize="9" fill="currentColor" stroke="none">.00</text>
                </Icon>
              </Slot>
              <Slot $w={26} aria-label="Decrease decimal">
                <Icon w={16} h={18}>
                  <path d="M0 13h6M4 11l2 2-2 2" />
                  <text x="3" y="8" fontSize="9" fill="currentColor" stroke="none">.00</text>
                  <text x="8" y="17" fontSize="9" fill="currentColor" stroke="none">.0</text>
                </Icon>
              </Slot>
            </ToolRow>
          </ToolRows>
        </GroupBody>
        <GroupLabel $launch>Number</GroupLabel>
        <Launcher aria-label="Number options"><LaunchIcon /></Launcher>
      </Group>

      <Group $w={198}>
        <GroupBody $pad={9}>
          <BigTool $w={73}>
            <BigIcon><TableGlyph kind="conditional" /></BigIcon>
            <span>Conditional</span>
            <span>Formatting <Chevron /></span>
          </BigTool>
          <BigTool $w={63}>
            <BigIcon><TableGlyph kind="table" /></BigIcon>
            <span>Format as</span>
            <span>Table <Chevron /></span>
          </BigTool>
          <BigTool $w={46}>
            <BigIcon><TableGlyph kind="cell" /></BigIcon>
            <span>Cell</span>
            <span>Styles <Chevron /></span>
          </BigTool>
        </GroupBody>
        <GroupLabel>Styles</GroupLabel>
      </Group>

      <Group $w={106}>
        <GroupBody $pad={12}>
          <SmallRows>
            <SmallTool>
              <CellsGlyph kind="insert" />
              <CellsText>Insert</CellsText>
              <Chevron />
            </SmallTool>
            <SmallTool>
              <CellsGlyph kind="delete" />
              <CellsText>Delete</CellsText>
              <Chevron />
            </SmallTool>
            <SmallTool>
              <CellsGlyph kind="format" />
              <CellsText>Format</CellsText>
              <Chevron />
            </SmallTool>
          </SmallRows>
        </GroupBody>
        <GroupLabel>Cells</GroupLabel>
      </Group>

      <Group $w={157}>
        <GroupBody $pad={12}>
          <SmallRows>
            <SmallTool $gap={12} aria-label="AutoSum">
              <Icon w={16}>
                <path d="M13.500 3V1.500H2l6 6.500-6 6.500h11.500V13" />
              </Icon>
              <Chevron />
            </SmallTool>
            <SmallTool $gap={5} aria-label="Fill">
              <Icon w={16}>
                <path d="M.5 1.500h15v13H.5zM.5 4.500h15" fill="#f0f0f0" />
                <path d="M8 6v7M5 10l3 3 3-3" />
              </Icon>
              <Chevron />
            </SmallTool>
            <SmallTool $gap={5} aria-label="Clear">
              <Icon w={16}>
                <path d="M9.500 1.500l5 5-7 8-6-4.500z" fill="#f0f0f0" />
                <path d="M4.500 6.500l6 5-3 3-6-4.500z" fill="#c9c9c9" />
              </Icon>
              <Chevron />
            </SmallTool>
          </SmallRows>
          <EditingTools>
            <BigTool $w={46}>
              <BigIcon>
                <Icon w={30} h={30}>
                  <path d="M1 13L5 2l4 11M2.500 10h5M1.500 17.500h7l-7 10h7.500" />
                  <path d="M13.500 7.500h16l-6 8v8l-4-2v-6l-6-7z" fill="#f4f4f4" />
                </Icon>
              </BigIcon>
              <span>Sort &amp;</span>
              <span>Filter <Chevron /></span>
            </BigTool>
            <BigTool $w={46}>
              <BigIcon>
                <Icon w={30} h={30}>
                  <circle cx="19" cy="11" r="10" fill="#f4f4f4" />
                  <path d="M12.500 18.500L1 29.500" />
                </Icon>
              </BigIcon>
              <span>Find &amp;</span>
              <span>Select <Chevron /></span>
            </BigTool>
          </EditingTools>
        </GroupBody>
        <GroupLabel>Editing</GroupLabel>
      </Group>

      <Group $w={74}>
        <GroupBody>
          <BigTool $w={74}>
            <BigIcon>
              <Icon w={28} h={32}>
                <path d="M.5 3.500h20v27H.5z" fill="#e9e9e9" />
                <path d="M3 21L14 10l5 5L8 26z" fill="#fff" />
                <path d="M5.500 21.500l8-8 2.500 2.500-8 8z" fill="#d0d0d0" />
                <path d="M11 7l3-3 3 2 4-4 5 5-4 4 2 3-3 3z" fill="#d9d9d9" stroke="#8f8f8f" />
              </Icon>
            </BigIcon>
            <span>Sensitivity</span>
            <Chevron />
          </BigTool>
        </GroupBody>
        <GroupLabel>Sensitivity</GroupLabel>
      </Group>

      <Group $w={63}>
        <GroupBody>
          <BigTool $w={62}>
            <BigIcon>
              <Icon w={28} h={28}>
                <path d="M.5.5h27v27H.5z" />
                <path d="M3.500 3.500h9v9h-9zM15.500 3.500h9v9h-9zM3.500 15.500h9v9h-9zM15.500 15.500h9v9h-9z" />
              </Icon>
            </BigIcon>
            <span>Add-ins</span>
          </BigTool>
        </GroupBody>
        <GroupLabel>Add-ins</GroupLabel>
      </Group>
      <RibbonToggle aria-label="Ribbon display options"><WideChevron /></RibbonToggle>
    </Ribbon>
  );
}

function FrontExcel() {
  return (
    <Window>
      <ExcelHeader name="PRXH0EPI.csv  -  Excel" />
      <RibbonTabs>
        {ribbonTabs.map(([name, w]) => (
          <RibbonTab key={name} $w={w} $active={name === "Home"}>
            <span>{name}</span>
          </RibbonTab>
        ))}
        <Comments>
          <Icon w={12} h={11}>
            <path d="M.5.5h11v7H5L2.500 10V7.500h-2z" />
          </Icon>
          Comments
        </Comments>
      </RibbonTabs>
      <HomeRibbon />
      <FormulaBar>
        <NameBox aria-label="Name box"><WideChevron /></NameBox>
        <Dots>
          <Icon w={2} h={12} fill="#333">
            <path d="M0 0h2v2H0zM0 4.500h2v2H0zM0 9h2v2H0z" stroke="none" />
          </Icon>
        </Dots>
        <FxBox>
          <Icon w={13}>
            <path d="M.5.5l12 12M12.500.5l-12 12" stroke="#b5b5b5" />
          </Icon>
          <Icon w={16} h={12}>
            <path d="M.5 6l5 5L15.500.5" stroke="#b5b5b5" />
          </Icon>
          <em>fx</em>
          <Icon w={10} h={7}>
            <path d="M.5 1L5 5.500 9.500 1" stroke="#888" />
          </Icon>
        </FxBox>
        <FormulaField>
          <input defaultValue="Co Code" aria-label="Formula" />
          <WideChevron up />
        </FormulaField>
      </FormulaBar>
      <SheetArea>
        <SheetClip>
          <Sheet>
            <colgroup>
              <col />
              {columns.map((_, i) => (
                <col key={i} />
              ))}
            </colgroup>
            <thead>
              <tr>
                <ColHead $corner>
                  <Icon w={12}>
                    <path d="M12 0v12H0z" fill="#b4b4b4" stroke="none" />
                  </Icon>
                </ColHead>
                {columns.map((c, i) => (
                  <ColHead key={i} $on={i === 0}>{c}</ColHead>
                ))}
              </tr>
            </thead>
            <tbody>
              <tr>
                <RowHead $on>1</RowHead>
                {headings.map((h, i) => (
                  <Cell key={i} $clip={i > 0} $selected={i === 0}>{h}</Cell>
                ))}
              </tr>
              {rows.map((row) => (
                <tr key={row.n}>
                  <RowHead>{row.n}</RowHead>
                  {columns.map((_, i) => (
                    <Cell key={i} $num={typeof row.cells[i] === "number"}>{row.cells[i]}</Cell>
                  ))}
                </tr>
              ))}
            </tbody>
          </Sheet>
        </SheetClip>
        <VScroll>
          <Tri d="M5 0l5 8H0z" />
          <i />
          <Tri d="M5 8l5-8H0z" />
        </VScroll>
      </SheetArea>
      <SheetTabs>
        <Slot $w={62} aria-label="Previous sheet">
          <Icon w={6} h={11}><path d="M5.500.5l-5 5 5 5" stroke="#999" /></Icon>
        </Slot>
        <Slot $w={8} aria-label="Next sheet">
          <Icon w={6} h={11}><path d="M.5.5l5 5-5 5" stroke="#999" /></Icon>
        </Slot>
        <SheetTab><span>PRXH0EPI</span></SheetTab>
        <Bar $m={4} />
        <Slot $w={84} aria-label="New sheet"><Plus size={11} /></Slot>
        <MoreTabs>
          <Icon w={2} h={12} fill="#333">
            <path d="M0 1h2v2H0zM0 5h2v2H0zM0 9h2v2H0z" stroke="none" />
          </Icon>
        </MoreTabs>
        <HScroll>
          <Tri d="M8 0v8L1 4z" />
          <i />
          <Tri d="M2 0v8l7-4z" />
        </HScroll>
      </SheetTabs>
      <StatusBar>
        <ReadyText>Ready</ReadyText>
        <Icon w={15} h={14}>
          <circle cx="6.500" cy="2" r="1.500" />
          <path d="M1 3.500l4 1.500v3l-2 5M12 3.500L8 5v3M5 5h3M5.500 9l1-1M8 8l6 6M14 8l-6 6" />
        </Icon>
        <StatusRight>
          <Icon w={14}>
            <path d="M.5.5h13v13H.5zM5 .5v13M9.500.5v13M.5 5h13M.5 9.500h13" />
          </Icon>
          <Icon w={14}>
            <path d="M.5.5h13v13H.5zM3.500 3h7v8h-7zM5 5.500h4M5 7.500h4M5 9.500h4" />
          </Icon>
          <Icon w={14}>
            <path d="M.5.5h13v13H.5zM4.500.5v8h5v-8M7 .5v5" />
          </Icon>
          <Zoom>
            <Icon w={10}><path d="M1 4.500h8" /></Icon>
            <Icon w={100} h={7}>
              <path d="M0 3.500h100M50.500 0v7" stroke="#666" />
            </Icon>
            <Plus size={9} />
            <ZoomValue>10%</ZoomValue>
          </Zoom>
        </StatusRight>
      </StatusBar>
    </Window>
  );
}

function ConvertDialog() {
  return (
    <Dialog role="dialog" aria-label="Microsoft Excel">
      <DialogTitle>
        Microsoft Excel
        <button aria-label="Close"><Close /></button>
      </DialogTitle>
      <DialogBody>
        <DialogIcon><WarningIcon /></DialogIcon>
        <div>
          <p>By default, Excel will perform the following data conversions in this file:</p>
          <p>• Remove leading zeros</p>
          <p>Do you want to permanently keep these conversions?</p>
          <Check>
            <input type="checkbox" />
            Don't notify me about default conversions in .csv or similar files.
          </Check>
          <DialogButtons>
            <DialogButton $primary>Convert</DialogButton>
            <DialogButton>Don't Convert</DialogButton>
            <DialogButton>Help</DialogButton>
          </DialogButtons>
        </div>
      </DialogBody>
    </Dialog>
  );
}

const excelColors = ["#21a366", "#33c481", "#107c41", "#185c37", "#107c41"];
const wordColors = ["#41a5ee", "#2b7cd3", "#185abd", "#103f91", "#185abd"];
const apps = [
  ["Outlook", <OutlookIcon />, true],
  ["Teams", <TeamsIcon />, true],
  ["Sage", <SageRound size={24} />, true],
  ["Explorer", <FolderIcon />, true],
  ["Snipping Tool", <SnipIcon />, false],
  ["Excel", <OfficeIcon letter="X" colors={excelColors} />, true],
  ["Chrome", <ChromeIcon />, true],
  ["Keeper", <KeeperIcon />, false],
  ["Acrobat", <AcrobatIcon />, true],
  ["Word", <OfficeIcon letter="W" colors={wordColors} />, true],
  ["Greenshot", <PurpleIcon />, true],
  ["App", null, true],
  ["Settings", <GearIcon />, true],
];

function TaskbarArea() {
  return (
    <Taskbar>
      <Start aria-label="Start"><WinLogo /></Start>
      <TaskSearch>
        <Magnifier size={17} />
        <input placeholder="Type here to search" aria-label="Type here to search" />
      </TaskSearch>
      <TaskApps>
        {apps.map(([name, icon, open]) => (
          <TaskApp key={name} aria-label={name} $open={open} $active={name === "Excel"}>
            {icon}
          </TaskApp>
        ))}
      </TaskApps>
      <Tray>
        <button aria-label="Keeper"><KeeperIcon small /></button>
        <button aria-label="D"><TrayBadge bg="#33353f" letter="D" /></button>
        <button aria-label="Teams"><TeamsIcon size={16} /></button>
        <button aria-label="Dropbox">
          <svg width="16" height="16" viewBox="0 0 16 16">
            <path d="M4 0l3 2-3 2-3-2zM11 0l3 2-3 2-3-2zM11 4l3 2-3 2-3-2zM11 8l3 2-3 2-3-2z" fill="#fff" />
            <rect y="6" width="9" height="10" rx="1" fill="#d8102a" />
            <Letter x={4.5} y={14} size={9}>1</Letter>
          </svg>
        </button>
        <button aria-label="Sync">
          <svg width="16" height="16" viewBox="0 0 16 16">
            <circle cx="8" cy="8" r="8" fill="#b5b5b5" />
            <path d="M12 5H7a1.500 1.500 0 000 3h2a1.500 1.500 0 010 3.500H4" fill="none" stroke="#333" strokeWidth="1.500" />
          </svg>
        </button>
        <button aria-label="Nx">
          <svg width="16" height="16" viewBox="0 0 16 16">
            <Letter x={6} y={11} size={14}>N</Letter>
            <Letter x={12} y={16} size={12} fill="#ddd">x</Letter>
          </svg>
        </button>
        <button aria-label="Outlook"><OutlookIcon size={16} /></button>
        <button aria-label="USB">
          <Icon w={14} h={16}>
            <path d="M3.500 5V.5h6V5M5.500 3h.5M7.500 3h.5M2 5.500h8.500v4M2 5.500v8c0 1 1 2 2 2h3M8 13l2 2 4-5" />
          </Icon>
        </button>
        <button aria-label="Security">
          <svg width="16" height="16" viewBox="0 0 16 16">
            <path d="M8 0c2 1.500 4 2 7 2 0 6-1 11-7 14C2 13 1 8 1 2c3 0 5-.5 7-2z" fill="#fff" />
            <path d="M8 0v15M1 7.500h14" stroke="#222" />
            <circle cx="11.500" cy="11.500" r="4.500" fill="#10893e" />
            <path d="M9.500 11.500l1.500 1.500 2.500-3" stroke="#fff" fill="none" />
          </svg>
        </button>
        <button aria-label="Battery">
          <Icon w={16} h={14}>
            <path d="M5 4.500h9.500v7H5V8M14.500 6.500h1v3h-1M1.500.5v2M4.500.5v2M.5 2.500h5v2c0 3-5 3-5 0zM3 7v5h2" />
            <path d="M7 6h6v4H7z" fill="#fff" />
          </Icon>
        </button>
        <button aria-label="Network">
          <Icon w={16} h={15}>
            <path d="M5 2.500h10.500v8H3.500V6M9.500 10.500v3M6 13.500h7M.5.5h4v4h-4zM2.500 4.500v2" />
          </Icon>
        </button>
        <button aria-label="Volume">
          <Icon w={16}>
            <path d="M.5 5.500h3L7 2v12l-3.500-3.500h-3zM9 6c1 1 1 3 0 4M11 4c2 2 2 6 0 8M13 2c3.500 3.500 3.500 8.500 0 12" />
          </Icon>
        </button>
        <button aria-label="Microphone">
          <Icon w={12} h={16}>
            <rect x="3" y="0" width="6" height="11" rx="1" fill="#fff" />
            <path d="M.5 8c0 6 11 6 11 0M6 13v3M3.500 15.500h5" />
          </Icon>
        </button>
        <Clock>
          2:34 PM
          <br />
          8/5/2025
        </Clock>
        <Notice>
          <svg width="28" height="26" viewBox="0 0 28 26">
            <path d="M1 1h16v13H7l-4 4v-4H1z" fill="#fff" />
            <path d="M4 4.500h10M4 7.500h10M4 10.500h7" stroke="#222" />
            <circle cx="17" cy="16" r="9" fill="#333" stroke="#888" />
            <text x="17" y="20.500" fill="#fff" fontSize="12" textAnchor="middle">20</text>
          </svg>
        </Notice>
      </Tray>
    </Taskbar>
  );
}

function App() {
  return (
    <Desktop>
      <GlobalStyle />
      <SageApp />
      <TaskbarArea />
      <RearExcel />
      <FrontExcel />
      <ConvertDialog />
    </Desktop>
  );
}

export default App;
